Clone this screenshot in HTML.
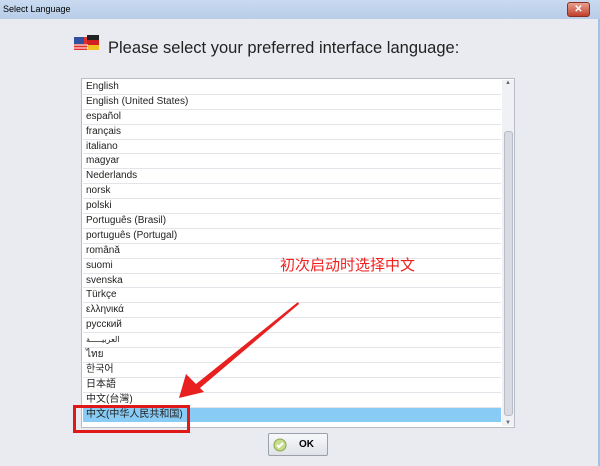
<!DOCTYPE html>
<html><head><meta charset="utf-8"><style>
body{margin:0;width:600px;height:466px;overflow:hidden;background:#e9ebf0;font-family:"Liberation Sans","Noto Sans CJK SC",sans-serif;position:relative}
.title{position:absolute;left:0;top:0;width:600px;height:19px;background:linear-gradient(#c9daf0,#b8cde8);font-size:9px;line-height:19px;padding-left:3px;color:#000;box-sizing:border-box}
.close{position:absolute;left:567px;top:2px;width:23px;height:15px;background:linear-gradient(#e8a090,#c0402c);border:1px solid #8a3020;border-radius:3px;box-sizing:border-box;color:#fff;font-size:10px;text-align:center;line-height:13px;font-weight:bold}
.rb{position:absolute;left:598px;top:19px;width:2px;height:447px;background:#9cc4ec}
.head{position:absolute;left:108px;top:39px;font-size:16.5px;color:#222}
.list{position:absolute;left:81px;top:78px;width:434px;height:350px;border:1px solid #b8bcc4;background:#fff;box-sizing:border-box}
.rows{position:absolute;left:1px;top:1px;width:418px;display:flex;flex-direction:column}
.row{height:14.9px;flex:none;border-bottom:1px solid #e2e4ea;font-size:10px;line-height:14px;padding-left:3px;box-sizing:border-box;color:#222;white-space:nowrap}
.sel{background:#88cbf5}
.sb{position:absolute;left:420px;top:1px;width:12px;height:346px;background:#f0f1f4}
.thumb{position:absolute;left:2px;top:51px;width:7px;height:283px;background:#d8dbe2;border:1px solid #b8bcc6;border-radius:3px}
.ok{position:absolute;left:268px;top:433px;width:60px;height:23px;border:1px solid #9aa0aa;background:linear-gradient(#f8f9fb,#dfe2e8);box-sizing:border-box;border-radius:2px;font-size:10px;font-weight:bold}
</style></head><body>
<div class="title">Select Language</div>
<div class="close">✕</div>
<div class="rb"></div>
<svg style="position:absolute;left:73px;top:33px" width="28" height="22"><rect x="1" y="4" width="14" height="13" fill="#e03030"/><rect x="1" y="4" width="10" height="7" fill="#3050a0"/><rect x="14" y="2" width="12" height="5" fill="#222"/><rect x="14" y="7" width="12" height="5" fill="#d02020"/><rect x="14" y="12" width="12" height="5" fill="#f0c020"/><path d="M1 12h14M1 15h14" stroke="#fff"/></svg>
<div class="head">Please select your preferred interface language:</div>
<div class="list">
<div class="rows">
<div class="row">English</div>
<div class="row">English (United States)</div>
<div class="row">español</div>
<div class="row">français</div>
<div class="row">italiano</div>
<div class="row">magyar</div>
<div class="row">Nederlands</div>
<div class="row">norsk</div>
<div class="row">polski</div>
<div class="row">Português (Brasil)</div>
<div class="row">português (Portugal)</div>
<div class="row">română</div>
<div class="row">suomi</div>
<div class="row">svenska</div>
<div class="row">Türkçe</div>
<div class="row">ελληνικά</div>
<div class="row">русский</div>
<div class="row" style="font-size:8px">العربيـــــة</div>
<div class="row">ไทย</div>
<div class="row">한국어</div>
<div class="row">日本語</div>
<div class="row">中文(台灣)</div>
<div class="row sel" style="border-bottom:none">中文(中华人民共和国)</div>
</div>
<div class="sb"><div style="font-size:6px;color:#666;text-align:center">▲</div><div class="thumb"></div><div style="position:absolute;bottom:0;width:12px;font-size:6px;color:#666;text-align:center">▼</div></div>
</div>
<div style="position:absolute;left:73px;top:405px;width:117px;height:28px;border:3px solid #e01818;box-sizing:border-box"></div>
<svg style="position:absolute;left:0;top:0" width="600" height="466"><polygon points="298,302 196,384 186,374 179,398 204,392 200,388 299,304" fill="#e82020"/></svg>
<div style="position:absolute;left:280px;top:256px;font-size:15px;color:#f02020;font-family:'Noto Sans CJK SC',sans-serif;line-height:18px">初次启动时选择中文</div>
<div class="ok"><svg style="position:absolute;left:4px;top:4px" width="14" height="14"><circle cx="7" cy="7" r="6" fill="#c8dc90" stroke="#88a848"/><path d="M4 7l2 2 4-4" stroke="#fff" stroke-width="2" fill="none"/></svg><span style="position:absolute;left:30px;top:5px">OK</span></div>
</body></html>
